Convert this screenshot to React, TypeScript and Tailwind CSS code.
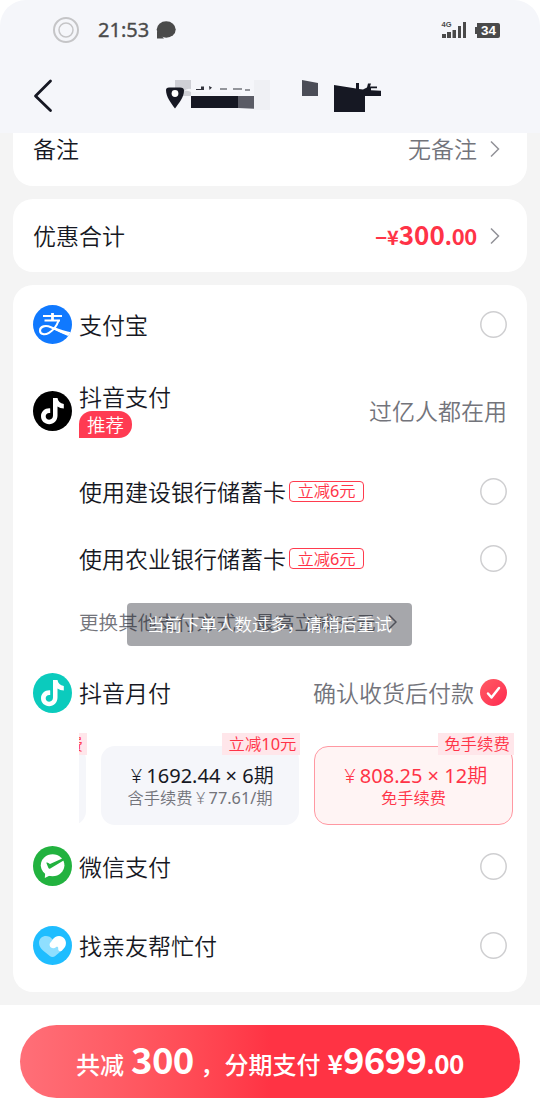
import type { ReactNode } from "react";

const sans = "font-['Noto_Sans','Noto_Sans_CJK_SC',sans-serif]";
const num = "font-['Noto_Sans_CJK_SC',sans-serif] font-bold";

function Chevron() {
  return (
    <svg width="10" height="18" viewBox="0 0 10 18" fill="none" stroke="#929298" strokeWidth="1.5" className="ml-[13px] mr-[7px] shrink-0">
      <path d="M1 1.500 8.500 9 1 16.500" />
    </svg>
  );
}

function Radio() {
  return (
    <svg width="27" height="27" viewBox="0 0 27 27" fill="none" className="shrink-0">
      <circle cx="13.5" cy="13.5" r="12.700" stroke="#cfcfd1" strokeWidth="1.500" />
    </svg>
  );
}

function Row({ h, icon, children, right }: { h: string; icon?: ReactNode; children: ReactNode; right?: ReactNode }) {
  return (
    <div className={`flex shrink-0 items-center pl-5 pr-5 ${h}`}>
      <div className="mr-[7px] flex w-[39px] shrink-0 items-center">{icon}</div>
      {children}
      <div className="ml-auto flex items-center">{right}</div>
    </div>
  );
}

function Label({ children }: { children: ReactNode }) {
  return <span className="block whitespace-nowrap pt-[2px] font-[350]">{children}</span>;
}

function Offer() {
  return (
    <span className="ml-[3px] flex h-[21px] w-[75px] items-center justify-center whitespace-nowrap rounded-[4px] border border-[#ff3b4e] text-[16.300px] font-[350] leading-[20px] text-[#ff3347]">
      立减<span className="font-normal">6</span>元
    </span>
  );
}

function Alipay() {
  return (
    <svg width="39" height="39" viewBox="0 0 39 39" fill="none">
      <clipPath id="alipay"><circle cx="19.5" cy="19.5" r="19.5" /></clipPath>
      <circle cx="19.5" cy="19.5" r="19.5" fill="#1079ff" />
      <g clipPath="url(#alipay)" stroke="#fff">
        <path d="M10 11h19M11.500 15.500H27" strokeWidth="1.900" />
        <path d="M19.500 8v7.500" strokeWidth="2.800" />
        <path d="M25.800 15c-2 5.800-5.500 10.300-9.800 12.800-4.500 2.600-9 1.600-9-2.300 0-4.300 5.600-5.600 11-3.300 6 2.500 12 5.600 20 8" strokeWidth="2.100" />
        <path d="M21 22c6 2.300 12 4.500 18 5.500l-1.500 4.500C31 29.500 25 26.500 19 23.500Z" fill="#fff" stroke="none" />
      </g>
    </svg>
  );
}

function Note({ bg }: { bg: string }) {
  return (
    <svg width="39" height="40" viewBox="0 0 39 40" fill="none">
      <ellipse cx="19.5" cy="20" rx="19.5" ry="20" fill={bg} />
      <path
        d="M20 7h4.500c.5 3.200 2.700 5.500 6.300 5.900v4.600c-2.400 0-4.500-.7-6.300-1.900v9c0 5-3.600 8.600-8.300 8.600-4.600 0-8.200-3.400-8.200-7.900 0-4.900 4.200-8.400 9.200-7.900v4.700c-2.500-.6-4.500.9-4.500 3.200 0 2 1.500 3.400 3.500 3.400 2.300 0 3.800-1.500 3.800-4.100Z"
        fill="#fff"
      />
    </svg>
  );
}

function WeChatPay() {
  return (
    <svg width="39" height="40" viewBox="0 0 39 40" fill="none">
      <ellipse cx="19.5" cy="20" rx="19.5" ry="20" fill="#22b23f" />
      <ellipse cx="19.600" cy="19.300" rx="11.800" ry="11" fill="#fff" />
      <path d="m12.300 26-.5 6 6-3Z" fill="#fff" />
      <path d="M13.300 16.800c1-.8 2 .1 3.700 1.300L29.800 12.300 31 14.300 17.300 22.500c-1 .5-1.500.2-2-.8Z" fill="#22b23f" />
    </svg>
  );
}

function Friends() {
  return (
    <svg width="39" height="39" viewBox="0 0 39 39" fill="none">
      <circle cx="19.5" cy="19.5" r="19.5" fill="#1fbdff" />
      <path d="M19.500 13.500C16 8 6 9 6 17c0 3.500 2 5.500 4 7.500l6.500 5.300c2 1.600 4 1.600 6 0l6.500-5.500L28 14Z" fill="#8fdfff" />
      <path d="M19.500 13.800c2-3.500 6.500-4.800 10-2.900 4 2.300 4.600 7.800 1.500 11.400l-2.200 2.400c-1.800 1.300-4-.2-3.600-2.300.3-1.500-1.200-2.200-2.300-1.200-2 1.900-5.700 1-6.200-1.700-.5-2.800 1.700-3.200 2.800-5.700Z" fill="#fff" />
    </svg>
  );
}

function Header() {
  return (
    <header className="h-[133px] w-full shrink-0 bg-white">
      <div className="flex h-full flex-col rounded-t-[26px] bg-[#f5f6fa]">
        <div className="flex h-[60px] items-center pl-[53px] pr-10 text-[#4a4a4a]">
          <svg width="26" height="26" viewBox="0 0 26 26" fill="none" stroke="#c5c5c7">
            <circle cx="13" cy="13" r="12" strokeWidth="2" />
            <circle cx="13" cy="13" r="7" strokeWidth="1.500" />
          </svg>
          <span className="ml-[19px] font-['Noto_Sans',sans-serif] text-[20px] font-normal leading-none [-webkit-text-stroke:0.35px_#4a4a4a]">21:53</span>
          <svg width="20" height="18" viewBox="0 0 20 18" fill="#4a4a4a" className="ml-[7px]">
            <ellipse cx="10.200" cy="8.500" rx="9.500" ry="8.300" />
            <path d="M1 10v7.500h7Z" />
          </svg>
          <svg width="60" height="18" viewBox="0 0 60 18" fill="#4a4a4a" className="ml-auto">
            <text x="1.500" y="6.300" fontSize="7.500" fontWeight="700" fontFamily="Liberation Sans, sans-serif">4G</text>
            <path d="M2 13h4v4H2ZM7 11h4v6H7ZM12.500 9h3.500v8h-3.500ZM18 5h3v12h-3ZM23 1h3v16h-3Z" />
            <path d="M37 2h21q2 0 2 2v11q0 2-2 2H37v-4h-2V6h2Z" />
            <text x="41" y="14" fontSize="13.500" fontWeight="700" fill="#fff" fontFamily="Liberation Sans, sans-serif">34</text>
          </svg>
        </div>
        <div className="flex h-[73px] items-center pl-[33px]">
          <svg width="20" height="34" viewBox="0 0 20 34" fill="none" stroke="#161823" strokeWidth="2.800" strokeLinecap="round" strokeLinejoin="round" className="mb-px">
            <path d="M17.500 2 2.500 17l15 14.500" />
          </svg>
          <svg width="222" height="36" viewBox="0 0 222 36" fill="none" className="mb-[2px] ml-[111px]">
            <path d="M11 2h16v16H11Z" fill="#cfd0d6" />
            <path d="M2 12Q2 9.500 5 9.500h11q4 0 4 3c0 7-5 12.500-9 18C7 25 2 19 2 12Z" fill="#161823" />
            <circle cx="11" cy="15.500" r="3.400" fill="#fff" />
            <path d="M27 11q-5-1-7 2.500 2-1.500 7 .5h50v3H27Z" fill="#f2f3f7" />
            <path d="M37 8.500h3v2.500h-3ZM32 11h8v1h-8ZM45 8l3 1.500-2.500 2.500ZM56 10.500h7v1h-7ZM69 10.500h9v1h-9ZM81 11.500h5v1h-5Z" fill="#33343d" />
            <path d="M27 18h48v12H27Z" fill="#161823" />
            <path d="M74 18h16v12.700L74 30Z" fill="#5a5b65" />
            <path d="M90 2h16v30H90Z" fill="#eff0f4" />
            <path d="m138 2 16 3v13h-16Z" fill="#4b4d57" />
            <path d="m170 7 22 3.500V5h3v6l4 .4 4-1.900 1-4h3l-1 3h7v1.700h-6v2l10 .6V18h-16v16h-31Z" fill="#161823" />
          </svg>
        </div>
      </div>
    </header>
  );
}

function Installments() {
  return (
    <div className="ml-[66px] flex h-[93px] shrink-0 items-start overflow-hidden font-[350]">
      <div className="relative mt-[13px] h-[79px] w-[7px] shrink-0">
        <div className="absolute right-0 h-[79px] w-[198px] rounded-[14px] bg-[#f5f6fa]" />
        <span className="absolute -right-px -top-[13px] flex h-[22px] w-[76px] items-center justify-end whitespace-nowrap bg-[#ffe6ea] pr-[4px] text-[16.400px] leading-[22px] text-[#ff3347]">免手续费</span>
      </div>
      <div className="relative ml-[15px] mt-[13px] flex h-[79px] w-[198px] shrink-0 flex-col items-center rounded-[14px] bg-[#f5f6fa] pt-[18px]">
        <span className="absolute -right-px -top-[13px] flex h-[22px] w-[78px] items-center justify-center whitespace-nowrap bg-[#ffe6ea] pl-[3px] text-[16.400px] leading-[22px] text-[#ff3347]">立减<span className="font-normal">10</span>元</span>
        <div className="flex h-[24px] items-center whitespace-pre text-[20px] leading-none text-[#161823]"><span className="w-5 text-center">¥</span><span className="font-normal">1692.44 × 6</span>期</div>
        <div className="flex h-[20px] items-center whitespace-nowrap text-[16.300px] leading-none text-[#73747b]">含手续费<span className="w-4 text-center">¥</span><span className="font-normal">77.61/</span>期</div>
      </div>
      <div className="relative ml-[15px] mt-[13px] flex h-[79px] w-[199px] shrink-0 flex-col items-center rounded-[14px] border border-[#ff98a2] bg-[#fff4f4] pt-[17px] text-[#ff3347]">
        <span className="absolute -right-[2px] -top-[14px] flex h-[22px] w-[76px] items-center justify-center whitespace-nowrap bg-[#ffe6ea] pl-[2px] text-[16.400px] leading-[22px]">免手续费</span>
        <div className="flex h-[24px] items-center whitespace-pre text-[20px] leading-none"><span className="w-5 text-center">¥</span><span className="font-normal">808.25 × 12</span>期</div>
        <div className="flex h-[20px] items-center text-[16.300px] leading-none">免手续费</div>
      </div>
    </div>
  );
}

export default function App() {
  return (
    <div className={`relative flex h-[1120px] w-[540px] flex-col overflow-hidden bg-[#f4f4f4] text-[23px] leading-none text-[#161823] ${sans}`}>
      <Header />
      <main className="flex h-[872px] flex-col px-[13px]">
        <section className="flex h-[53px] shrink-0 items-center rounded-b-[20px] bg-white pb-[21px] pl-5 pr-5">
          <span className="font-[350]">备注</span>
          <span className="ml-auto font-[350] text-[#73747b]">无备注</span>
          <Chevron />
        </section>
        <section className="mt-[13px] flex h-[73px] shrink-0 items-center rounded-[20px] bg-white pl-5 pr-5">
          <Label>优惠合计</Label>
          <span className={`ml-auto flex items-baseline pb-[4px] text-[#ff3347] ${num}`}>
            <span className="text-[20px]">−¥</span>
            <span className="text-[26px]">300</span>
            <span className="text-[22px] tracking-[-0.3px]">.00</span>
          </span>
          <Chevron />
        </section>
        <section className="mt-[13px] flex h-[707px] shrink-0 flex-col rounded-[20px] bg-white">
          <Row h="h-[79px]" icon={<Alipay />} right={<Radio />}><Label>支付宝</Label></Row>
          <Row h="h-[93px]" icon={<Note bg="#000000" />} right={<span className="text-[#73747b]"><Label>过亿人都在用</Label></span>}>
            <div className="flex flex-col items-start font-[350]">
              <span className="leading-[27px]">抖音支付</span>
              <span className="flex h-[27px] w-[53px] items-center justify-center rounded-[13px] rounded-bl-none bg-[#ff3b52] text-[18.500px] leading-[27px] text-white">推荐</span>
            </div>
          </Row>
          <Row h="h-[68px]" right={<Radio />}><Label>使用建设银行储蓄卡</Label><Offer /></Row>
          <Row h="h-[67px]" right={<Radio />}><Label>使用农业银行储蓄卡</Label><Offer /></Row>
          <Row h="h-[60px]">
            <span className="whitespace-nowrap pt-[2px] text-[19.600px] font-[350] text-[#73747b]">更换其他支付方式，最高立减38元</span>
            <svg width="9" height="16" viewBox="0 0 9 16" fill="none" stroke="#73747b" strokeWidth="1.500" className="ml-[12px]">
              <path d="m1 1 7 7-7 7" />
            </svg>
          </Row>
          <Row
            h="h-[81px]"
            icon={<Note bg="#0bcbbd" />}
            right={
              <>
                <span className="mr-[6px] text-[#73747b]"><Label>确认收货后付款</Label></span>
                <span className="flex h-[27px] w-[27px] items-center justify-center rounded-full bg-gradient-to-br from-[#ff5a64] to-[#ff2450]">
                  <svg width="15" height="14" viewBox="0 0 15 14" fill="none" stroke="#fff" strokeWidth="2.500" strokeLinecap="round" strokeLinejoin="round">
                    <path d="m2 7.500 3.500 4L13 2" />
                  </svg>
                </span>
              </>
            }
          >
            <Label>抖音月付</Label>
          </Row>
          <Installments />
          <Row h="h-[80px]" icon={<WeChatPay />} right={<Radio />}><Label>微信支付</Label></Row>
          <Row h="h-[79px]" icon={<Friends />} right={<Radio />}><Label>找亲友帮忙付</Label></Row>
        </section>
      </main>
      <footer className="h-[115px] shrink-0 bg-white px-5 pt-5">
        <button className={`flex h-[73px] w-full items-baseline justify-center whitespace-nowrap rounded-full bg-gradient-to-r from-[#ff6f78] to-[#ff3344] to-50% pb-[4px] leading-[67px] text-white ${num}`}>
          <span className="text-[24px] font-medium">共减</span>
          <span className="ml-[7px] text-[36.500px] tracking-[-0.700px]">300</span>
          <span className="ml-[7px] text-[24px] font-medium">，</span>
          <span className="text-[24px] font-medium">分期支付</span>
          <span className="ml-[7px] text-[26px]">¥</span>
          <span className="text-[36.500px] tracking-[-0.700px]">9699</span>
          <span className="text-[26px] tracking-[-0.500px]">.00</span>
        </button>
      </footer>
      <div className="absolute left-[127px] top-[603px] flex h-[43px] w-[285px] items-center justify-center whitespace-nowrap rounded-[4px] bg-[#161823]/38 text-[17.500px] font-[350] leading-[43px] text-white">
        当前下单人数过多，请稍后重试
      </div>
    </div>
  );
}
